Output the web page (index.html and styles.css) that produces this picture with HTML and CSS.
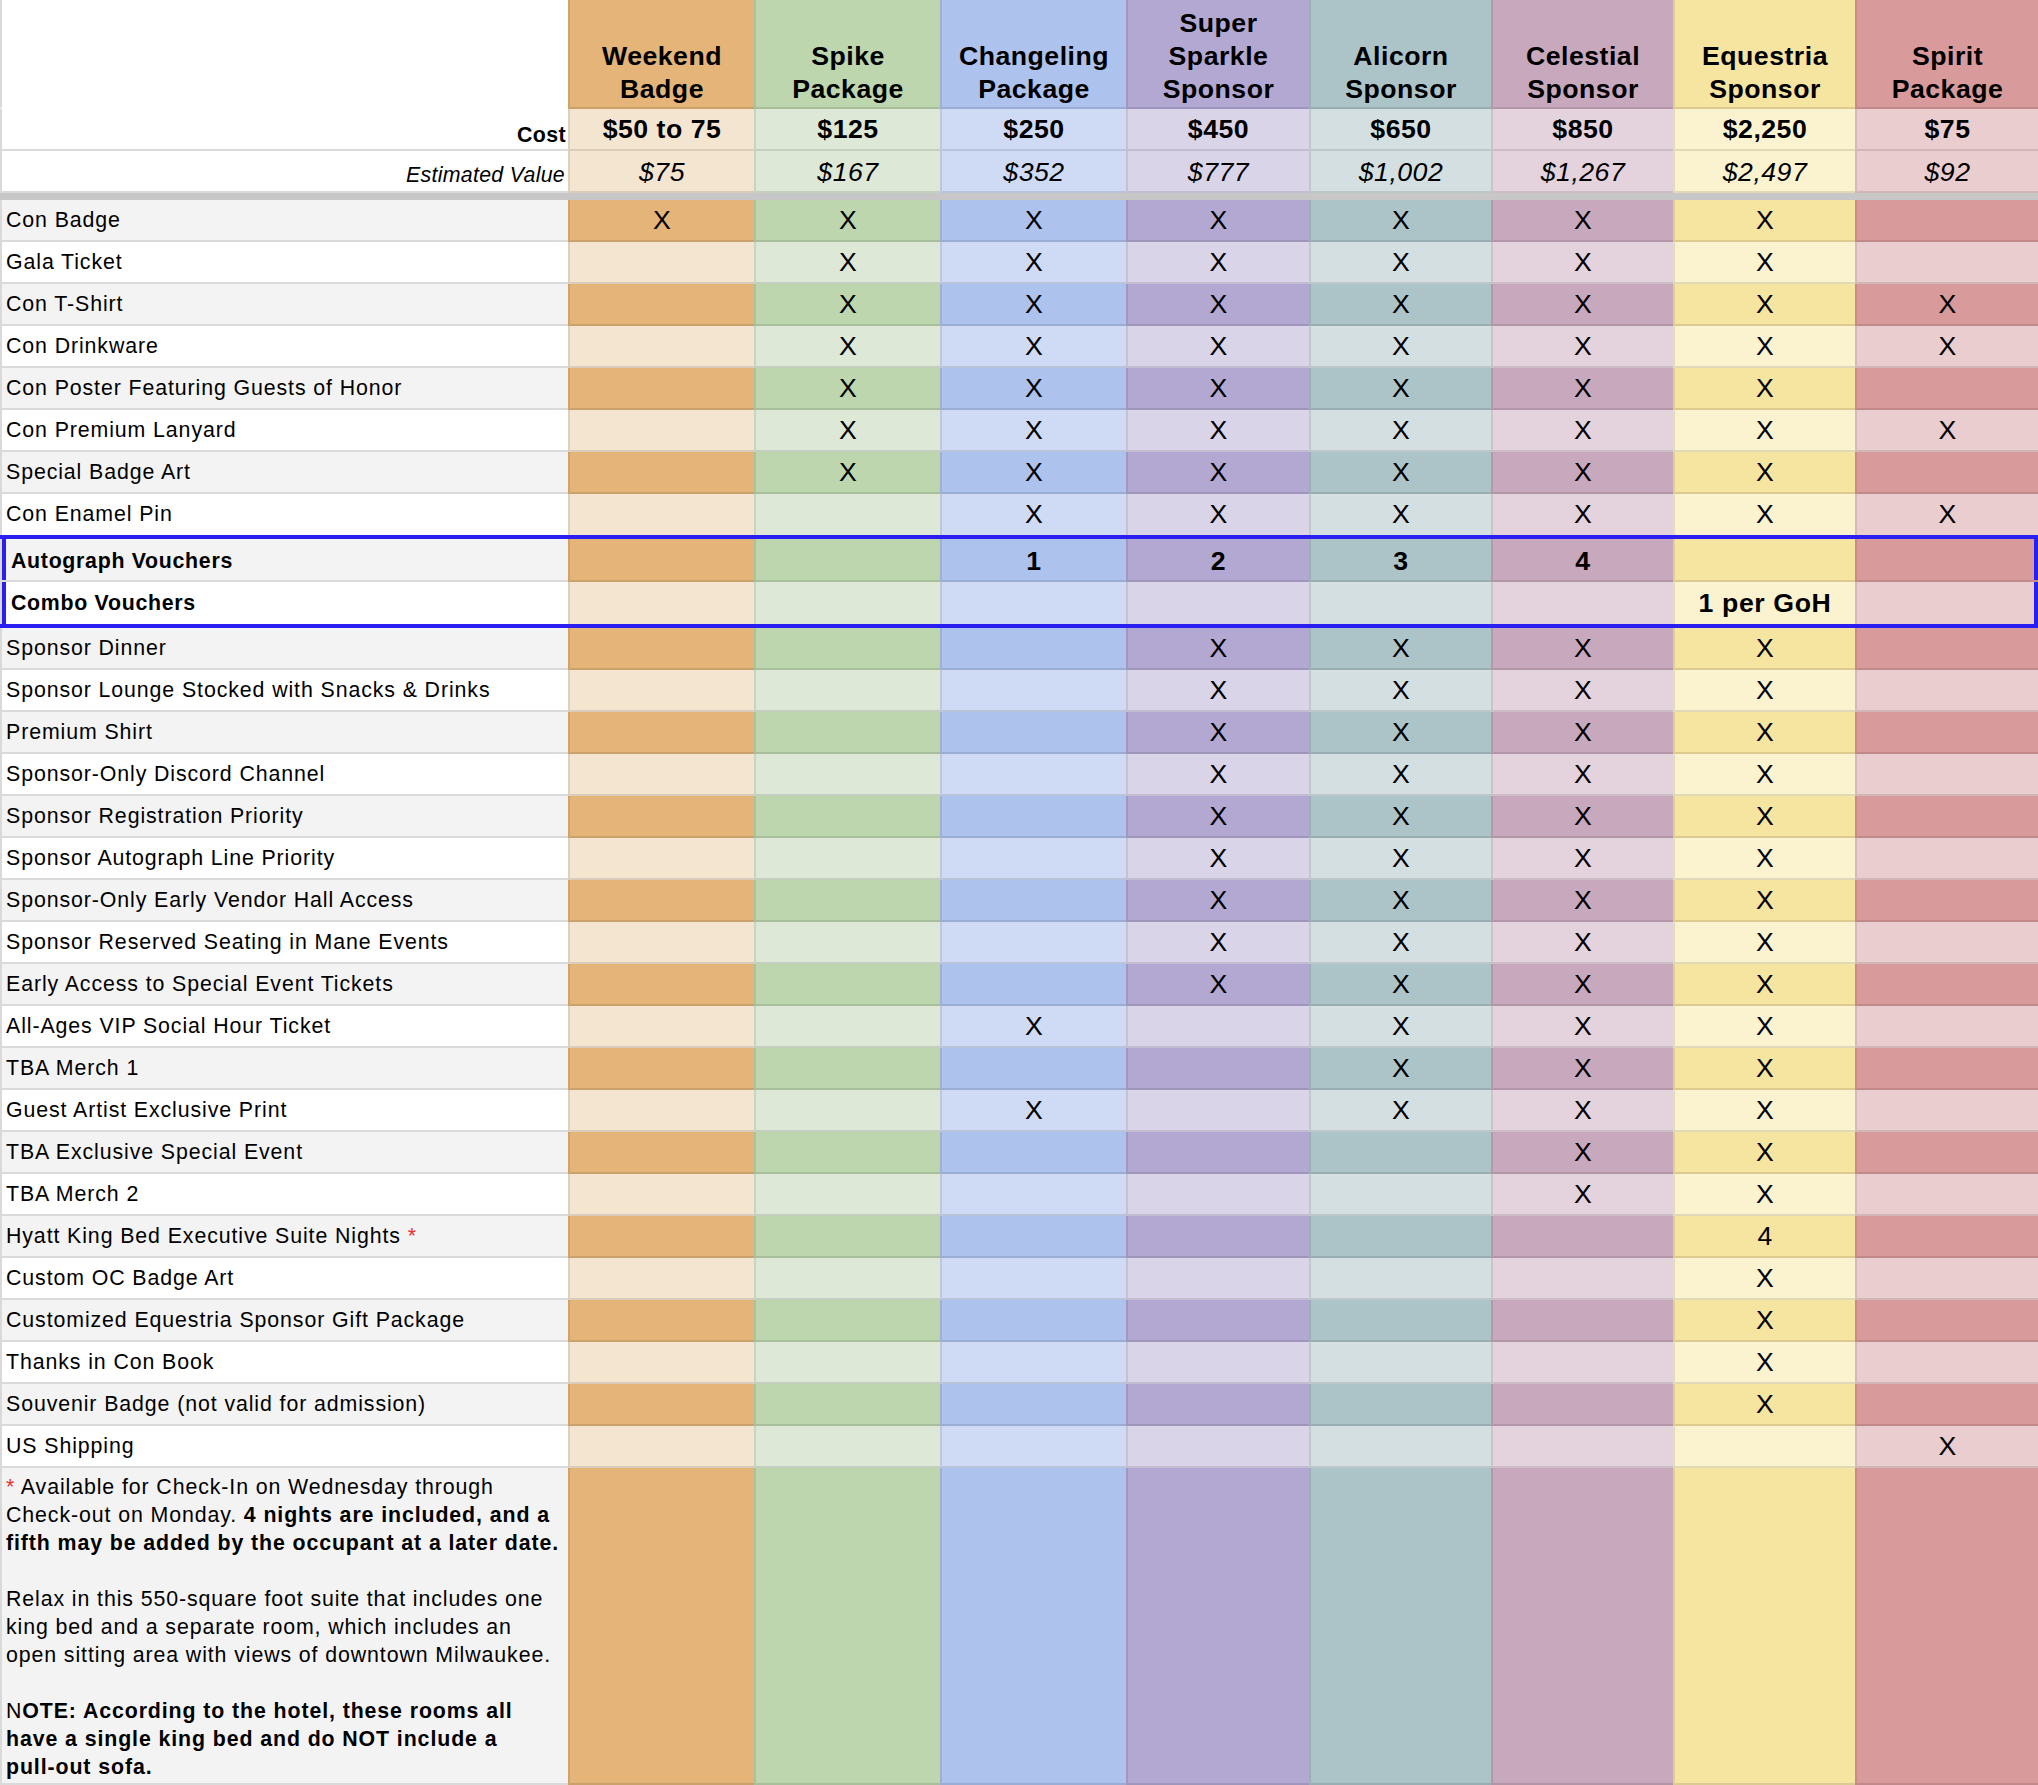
FILE: index.html
```html
<!DOCTYPE html>
<html lang="en">
<head>
<meta charset="utf-8">
<title>Sponsorship Packages</title>
<link rel="stylesheet" href="styles.css">
</head>
<body>
<div class="sheet">
  <div class="row hdr">
    <div class="lab"></div>
    <div class="c w"><span>Weekend<br>Badge</span></div>
    <div class="c s"><span>Spike<br>Package</span></div>
    <div class="c g"><span>Changeling<br>Package</span></div>
    <div class="c p"><span>Super<br>Sparkle<br>Sponsor</span></div>
    <div class="c a"><span>Alicorn<br>Sponsor</span></div>
    <div class="c e"><span>Celestial<br>Sponsor</span></div>
    <div class="c q"><span>Equestria<br>Sponsor</span></div>
    <div class="c r"><span>Spirit<br>Package</span></div>
  </div>
  <div class="row cost">
    <div class="lab">Cost</div>
    <div class="c w">$50 to 75</div>
    <div class="c s">$125</div>
    <div class="c g">$250</div>
    <div class="c p">$450</div>
    <div class="c a">$650</div>
    <div class="c e">$850</div>
    <div class="c q">$2,250</div>
    <div class="c r">$75</div>
  </div>
  <div class="row value">
    <div class="lab">Estimated Value</div>
    <div class="c w">$75</div>
    <div class="c s">$167</div>
    <div class="c g">$352</div>
    <div class="c p">$777</div>
    <div class="c a">$1,002</div>
    <div class="c e">$1,267</div>
    <div class="c q">$2,497</div>
    <div class="c r">$92</div>
  </div>

  <div class="row d"><div class="lab">Con Badge</div><div class="c w">X</div><div class="c s">X</div><div class="c g">X</div><div class="c p">X</div><div class="c a">X</div><div class="c e">X</div><div class="c q">X</div><div class="c r"></div></div>
  <div class="row l"><div class="lab">Gala Ticket</div><div class="c w"></div><div class="c s">X</div><div class="c g">X</div><div class="c p">X</div><div class="c a">X</div><div class="c e">X</div><div class="c q">X</div><div class="c r"></div></div>
  <div class="row d"><div class="lab">Con T-Shirt</div><div class="c w"></div><div class="c s">X</div><div class="c g">X</div><div class="c p">X</div><div class="c a">X</div><div class="c e">X</div><div class="c q">X</div><div class="c r">X</div></div>
  <div class="row l"><div class="lab">Con Drinkware</div><div class="c w"></div><div class="c s">X</div><div class="c g">X</div><div class="c p">X</div><div class="c a">X</div><div class="c e">X</div><div class="c q">X</div><div class="c r">X</div></div>
  <div class="row d"><div class="lab">Con Poster Featuring Guests of Honor</div><div class="c w"></div><div class="c s">X</div><div class="c g">X</div><div class="c p">X</div><div class="c a">X</div><div class="c e">X</div><div class="c q">X</div><div class="c r"></div></div>
  <div class="row l"><div class="lab">Con Premium Lanyard</div><div class="c w"></div><div class="c s">X</div><div class="c g">X</div><div class="c p">X</div><div class="c a">X</div><div class="c e">X</div><div class="c q">X</div><div class="c r">X</div></div>
  <div class="row d"><div class="lab">Special Badge Art</div><div class="c w"></div><div class="c s">X</div><div class="c g">X</div><div class="c p">X</div><div class="c a">X</div><div class="c e">X</div><div class="c q">X</div><div class="c r"></div></div>
  <div class="row l nb"><div class="lab">Con Enamel Pin</div><div class="c w"></div><div class="c s"></div><div class="c g">X</div><div class="c p">X</div><div class="c a">X</div><div class="c e">X</div><div class="c q">X</div><div class="c r">X</div></div>

  <div class="row d vb vtop"><div class="lab">Autograph Vouchers</div><div class="c w"></div><div class="c s"></div><div class="c g">1</div><div class="c p">2</div><div class="c a">3</div><div class="c e">4</div><div class="c q"></div><div class="c r"></div></div>
  <div class="row l vb vbot"><div class="lab">Combo Vouchers</div><div class="c w"></div><div class="c s"></div><div class="c g"></div><div class="c p"></div><div class="c a"></div><div class="c e"></div><div class="c q">1 per GoH</div><div class="c r"></div></div>

  <div class="row d"><div class="lab">Sponsor Dinner</div><div class="c w"></div><div class="c s"></div><div class="c g"></div><div class="c p">X</div><div class="c a">X</div><div class="c e">X</div><div class="c q">X</div><div class="c r"></div></div>
  <div class="row l"><div class="lab">Sponsor Lounge Stocked with Snacks &amp; Drinks</div><div class="c w"></div><div class="c s"></div><div class="c g"></div><div class="c p">X</div><div class="c a">X</div><div class="c e">X</div><div class="c q">X</div><div class="c r"></div></div>
  <div class="row d"><div class="lab">Premium Shirt</div><div class="c w"></div><div class="c s"></div><div class="c g"></div><div class="c p">X</div><div class="c a">X</div><div class="c e">X</div><div class="c q">X</div><div class="c r"></div></div>
  <div class="row l"><div class="lab">Sponsor-Only Discord Channel</div><div class="c w"></div><div class="c s"></div><div class="c g"></div><div class="c p">X</div><div class="c a">X</div><div class="c e">X</div><div class="c q">X</div><div class="c r"></div></div>
  <div class="row d"><div class="lab">Sponsor Registration Priority</div><div class="c w"></div><div class="c s"></div><div class="c g"></div><div class="c p">X</div><div class="c a">X</div><div class="c e">X</div><div class="c q">X</div><div class="c r"></div></div>
  <div class="row l"><div class="lab">Sponsor Autograph Line Priority</div><div class="c w"></div><div class="c s"></div><div class="c g"></div><div class="c p">X</div><div class="c a">X</div><div class="c e">X</div><div class="c q">X</div><div class="c r"></div></div>
  <div class="row d"><div class="lab">Sponsor-Only Early Vendor Hall Access</div><div class="c w"></div><div class="c s"></div><div class="c g"></div><div class="c p">X</div><div class="c a">X</div><div class="c e">X</div><div class="c q">X</div><div class="c r"></div></div>
  <div class="row l"><div class="lab">Sponsor Reserved Seating in Mane Events</div><div class="c w"></div><div class="c s"></div><div class="c g"></div><div class="c p">X</div><div class="c a">X</div><div class="c e">X</div><div class="c q">X</div><div class="c r"></div></div>
  <div class="row d"><div class="lab">Early Access to Special Event Tickets</div><div class="c w"></div><div class="c s"></div><div class="c g"></div><div class="c p">X</div><div class="c a">X</div><div class="c e">X</div><div class="c q">X</div><div class="c r"></div></div>
  <div class="row l"><div class="lab">All-Ages VIP Social Hour Ticket</div><div class="c w"></div><div class="c s"></div><div class="c g">X</div><div class="c p"></div><div class="c a">X</div><div class="c e">X</div><div class="c q">X</div><div class="c r"></div></div>
  <div class="row d"><div class="lab">TBA Merch 1</div><div class="c w"></div><div class="c s"></div><div class="c g"></div><div class="c p"></div><div class="c a">X</div><div class="c e">X</div><div class="c q">X</div><div class="c r"></div></div>
  <div class="row l"><div class="lab">Guest Artist Exclusive Print</div><div class="c w"></div><div class="c s"></div><div class="c g">X</div><div class="c p"></div><div class="c a">X</div><div class="c e">X</div><div class="c q">X</div><div class="c r"></div></div>
  <div class="row d"><div class="lab">TBA Exclusive Special Event</div><div class="c w"></div><div class="c s"></div><div class="c g"></div><div class="c p"></div><div class="c a"></div><div class="c e">X</div><div class="c q">X</div><div class="c r"></div></div>
  <div class="row l"><div class="lab">TBA Merch 2</div><div class="c w"></div><div class="c s"></div><div class="c g"></div><div class="c p"></div><div class="c a"></div><div class="c e">X</div><div class="c q">X</div><div class="c r"></div></div>
  <div class="row d"><div class="lab">Hyatt King Bed Executive Suite Nights<span class="ast">&nbsp;*</span></div><div class="c w"></div><div class="c s"></div><div class="c g"></div><div class="c p"></div><div class="c a"></div><div class="c e"></div><div class="c q">4</div><div class="c r"></div></div>
  <div class="row l"><div class="lab">Custom OC Badge Art</div><div class="c w"></div><div class="c s"></div><div class="c g"></div><div class="c p"></div><div class="c a"></div><div class="c e"></div><div class="c q">X</div><div class="c r"></div></div>
  <div class="row d"><div class="lab">Customized Equestria Sponsor Gift Package</div><div class="c w"></div><div class="c s"></div><div class="c g"></div><div class="c p"></div><div class="c a"></div><div class="c e"></div><div class="c q">X</div><div class="c r"></div></div>
  <div class="row l"><div class="lab">Thanks in Con Book</div><div class="c w"></div><div class="c s"></div><div class="c g"></div><div class="c p"></div><div class="c a"></div><div class="c e"></div><div class="c q">X</div><div class="c r"></div></div>
  <div class="row d"><div class="lab">Souvenir Badge (not valid for admission)</div><div class="c w"></div><div class="c s"></div><div class="c g"></div><div class="c p"></div><div class="c a"></div><div class="c e"></div><div class="c q">X</div><div class="c r"></div></div>
  <div class="row l"><div class="lab">US Shipping</div><div class="c w"></div><div class="c s"></div><div class="c g"></div><div class="c p"></div><div class="c a"></div><div class="c e"></div><div class="c q"></div><div class="c r">X</div></div>

  <div class="row d note">
    <div class="lab"><p><span class="ast">*</span> Available for Check-In on Wednesday through<br>Check-out on Monday. <b>4 nights are included, and a</b><br><b>fifth may be added by the occupant at a later date.</b><br><br>Relax in this 550-square foot suite that includes one<br>king bed and a separate room, which includes an<br>open sitting area with views of downtown Milwaukee.<br><br>N<b>OTE: According to the hotel, these rooms all</b><br><b>have a single king bed and do NOT include a</b><br><b>pull-out sofa.</b></p></div>
    <div class="c w"></div><div class="c s"></div><div class="c g"></div><div class="c p"></div><div class="c a"></div><div class="c e"></div><div class="c q"></div><div class="c r"></div>
  </div>
</div>
</body>
</html>
```

FILE: styles.css
```css
html, body {
  margin: 0;
  padding: 0;
  overflow: hidden;
  background: #fff;
}

body {
  font-family: "Liberation Sans", Arial, sans-serif;
  color: #000;
}

.sheet {
  display: flex;
  flex-direction: column;
  width: 2038px;
}

.row {
  display: grid;
  grid-template-columns: 568px 186px 186px 186px 183px 182px 182px 182px 183px;
}

.row > div {
  box-sizing: border-box;
  height: 42px;
  display: flex;
  align-items: center;
  white-space: nowrap;
}

/* label column */
.lab {
  border-left: 2px solid #d9d9d9;
  border-bottom: 2px solid #dadada;
  padding-left: 4px;
  font-size: 21.33px;
  letter-spacing: 0.9px;
}

.d .lab { background: #f3f3f3; }
.l .lab { background: #fff; }

/* package columns */
.c {
  border-left: 2px solid rgba(0, 0, 0, 0.09);
  border-bottom: 2px solid rgba(0, 0, 0, 0.1);
  justify-content: center;
  font-size: 26.67px;
  letter-spacing: 0.3px;
}

.w { --dk: #e4b478; --lt: #f4e5d1; }
.s { --dk: #bdd6ae; --lt: #dde8d6; }
.g { --dk: #aec2ee; --lt: #cfdaf4; }
.p { --dk: #b2a8d2; --lt: #d9d4e8; }
.a { --dk: #acc3c7; --lt: #d4dfe1; }
.e { --dk: #c8a8bc; --lt: #e4d3dd; }
.q { --dk: #f6e4a1; --lt: #fbf3cf; }
.r { --dk: #d89a9a; --lt: #eacdce; }

.d .c { background: var(--dk); }
.l .c { background: var(--lt); }

/* header */
.hdr > div {
  height: 109px;
  align-items: flex-end;
  padding-bottom: 1px;
}

.hdr .lab {
  background: #fff;
  border-bottom-color: #fff;
}

.hdr .c {
  background: var(--dk);
  font-weight: bold;
  line-height: 33px;
  text-align: center;
  letter-spacing: 0.5px;
}

/* cost row */
.cost .lab {
  background: #fff;
  justify-content: flex-end;
  align-items: flex-end;
  padding-right: 2px;
  padding-bottom: 1px;
  font-weight: bold;
  letter-spacing: 0.4px;
}

.cost .c {
  background: var(--lt);
  font-weight: bold;
  align-items: flex-end;
  padding-bottom: 4px;
  letter-spacing: 0.5px;
}

/* estimated value row */
.value {
  border-bottom: 7px solid #c7c7c7;
}

.value .lab {
  background: #fff;
  justify-content: flex-end;
  align-items: flex-end;
  padding-right: 3px;
  padding-bottom: 3px;
  font-style: italic;
  letter-spacing: 0.3px;
}

.value .c {
  background: var(--lt);
  font-style: italic;
  align-items: flex-end;
  padding-bottom: 3px;
  letter-spacing: 0.5px;
}

/* highlighted voucher block */
.nb > div {
  height: 41px;
  border-bottom: 0;
}

.vtop {
  border-top: 4px solid #2b1ef0;
}

.vtop > div {
  height: 43px;
  padding-top: 4px;
}

.vbot {
  border-bottom: 4px solid #2b1ef0;
}

.vbot > div {
  height: 42px;
  border-bottom: 0;
}

.vb .lab {
  font-weight: bold;
  padding-left: 9px;
  letter-spacing: 0.7px;
  box-shadow: inset 4px 0 0 #2b1ef0;
}

.vb .c {
  font-weight: bold;
  letter-spacing: 0.6px;
}

.vb .c:last-child {
  box-shadow: inset -4px 0 0 #2b1ef0;
}

.ast {
  color: #e8322e;
}

/* footnote row */
.note > div {
  height: 317px;
  align-items: flex-start;
}

.note .lab p {
  margin: 0;
  padding-top: 5px;
  line-height: 28px;
}
```
